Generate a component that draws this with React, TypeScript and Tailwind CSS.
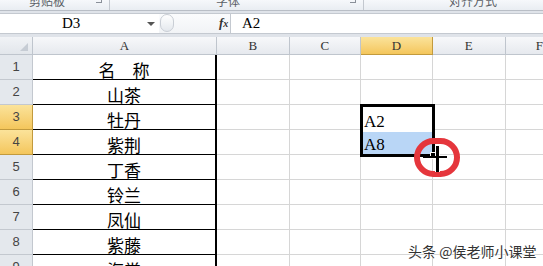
import React from "react";

const rows = ["名　称", "山茶", "牡丹", "紫荆", "丁香", "铃兰", "凤仙", "紫藤", "海棠"];
const cols = [
  { k: "B", w: "w-[73px]" },
  { k: "C", w: "w-[71px]" },
  { k: "D", w: "w-[72px]" },
  { k: "E", w: "w-[73px]" },
];

const cjk = { fontFamily: '"Noto Sans CJK SC", "Noto Sans", sans-serif' };

export default function App() {
  return (
    <div className="relative w-[543px] h-[266px] overflow-hidden bg-white select-none">
      {/* ribbon group labels (cut) */}
      <div className="flex h-[11px] overflow-hidden bg-gradient-to-b from-[#f6f8fb] to-[#e9edf2] border-b border-[#b9bec6] text-[12px] text-[#5b5f66]" style={cjk}>
        <div className="relative w-[110px] border-r border-[#c3c8cf]">
          <span className="absolute left-[29px] top-[-7px] leading-[16px]">剪贴板</span>
          <span className="absolute left-[96px] top-[-3px] w-[6px] h-[6px] border-r border-b border-[#8a9099]" />
        </div>
        <div className="relative w-[254px] border-r border-[#c3c8cf]">
          <span className="absolute left-[106px] top-[-7px] leading-[16px]">字体</span>
          <span className="absolute left-[240px] top-[-3px] w-[6px] h-[6px] border-r border-b border-[#8a9099]" />
        </div>
        <div className="relative flex-1">
          <span className="absolute left-[85px] top-[-7px] leading-[16px]">对齐方式</span>
        </div>
      </div>
      <div className="h-[2px] bg-[#dfe3e9]" />
      {/* formula bar */}
      <div className="flex h-[21px] bg-white border-y border-[#c4c9d0]">
        <div className="relative w-[159px] flex items-center">
          <span className="absolute left-[62px] top-[1px] text-[15px] leading-[17px] text-black font-['Liberation_Serif',serif]">D3</span>
          <span className="absolute left-[147px] top-[8px] w-0 h-0 border-l-[4px] border-r-[4px] border-t-[4px] border-l-transparent border-r-transparent border-t-[#555]" />
        </div>
        <div className="relative w-[71px] flex items-center bg-gradient-to-b from-[#fbfcfd] to-[#f1f3f6]">
          <span className="absolute left-[1px] top-[0px] w-[14px] h-[18px] rounded-full border border-[#c9ced5] bg-gradient-to-b from-[#ffffff] to-[#e4e8ed]" />
          <span className="absolute left-[60px] top-[0px] text-[13px] leading-[18px] italic font-bold text-[#333] font-['Liberation_Serif',serif]">
            f<span className="text-[10px]">x</span>
          </span>
        </div>
        <div className="w-px bg-[#c4c9d0]" />
        <div className="flex-1 relative">
          <span className="absolute left-[11px] top-[1px] text-[15px] leading-[17px] text-black font-['Liberation_Serif',serif]">A2</span>
        </div>
      </div>
      <div className="h-[3px] bg-[#dfe3e9]" />
      {/* column headers */}
      <div className="flex h-[18px] text-[13px] text-[#333] font-['Liberation_Serif',serif]">
        <div className="relative w-[33px] border-r border-b border-[#bfc5cd] bg-gradient-to-b from-[#f1f3f6] to-[#e2e6eb]">
          <span className="absolute right-[4px] bottom-[3px] w-0 h-0" style={{ borderBottom: "8px solid #c6ccd4", borderLeft: "8px solid transparent" }} />
        </div>
        <div className="w-[184px] flex items-center justify-center border-r border-b border-[#bfc5cd] bg-gradient-to-b from-[#f7f8fa] to-[#e6e9ee]">A</div>
        {cols.map((c) =>
          c.k === "D" ? (
            <div key={c.k} className={`${c.w} flex items-center justify-center border-r border-b border-[#c29a3d] bg-gradient-to-b from-[#fbe39a] to-[#f4c65b]`}>D</div>
          ) : (
            <div key={c.k} className={`${c.w} flex items-center justify-center border-r border-b border-[#bfc5cd] bg-gradient-to-b from-[#f7f8fa] to-[#e6e9ee]`}>{c.k}</div>
          )
        )}
        <div className="flex-1 flex items-center pl-[30px] border-b border-[#bfc5cd] bg-gradient-to-b from-[#f7f8fa] to-[#e6e9ee]">F</div>
      </div>
      {/* rows */}
      {rows.map((name, i) => {
        const sel = i === 2 || i === 3;
        return (
          <div key={i} className="flex h-[25px]">
            <div
              className={
                sel
                  ? "w-[33px] flex items-center justify-center border-r border-b border-[#c29a3d] bg-gradient-to-b from-[#fbe39a] to-[#f4c65b] text-[13px] text-[#444] font-['Liberation_Sans',sans-serif]"
                  : "w-[33px] flex items-center justify-center border-r border-b border-[#c3c8cf] bg-[#e4e8ed] text-[13px] text-[#444] font-['Liberation_Sans',sans-serif]"
              }
            >
              {i + 1}
            </div>
            <div className="w-[184px] flex items-center justify-center border-r-2 border-b border-black text-[17px] leading-none text-black pt-[4px]" style={cjk}>
              {name}
            </div>
            {cols.map((c) => (
              <div key={c.k} className={`${c.w} border-r border-b border-[#d6d6d6]`} />
            ))}
            <div className="flex-1 border-b border-[#d6d6d6]" />
          </div>
        );
      })}

      {/* selection D3:D4 */}
      <div className="absolute left-[360px] top-[104px] w-[75px] h-[53px] border-[3px] border-black flex flex-col bg-white text-[17px] text-black font-['Liberation_Serif',serif]">
        <div className="h-[24px] flex items-end pl-[1px] leading-[19px]">A2</div>
        <div className="flex-1 flex items-end pl-[1px] leading-[19px] bg-[#b9d6f6] mt-[1px]">A8</div>
      </div>
      {/* fill handle */}
      <div className="absolute left-[430px] top-[152px] w-[7px] h-[7px] bg-black border border-white" />
      {/* red highlight circle */}
      <div className="absolute left-[414px] top-[138px] w-[46px] h-[39px] rounded-full border-[6px] border-[#e5363c]" />
      {/* cursor */}
      <div className="absolute left-[435px] top-[146px] w-[3px] h-[26px] bg-black border-x border-white box-content" />
      <div className="absolute left-[423px] top-[156px] w-[24px] h-[2px] bg-black" />
      {/* watermark */}
      <div
        className="absolute left-[408px] top-[242px] text-[14px] leading-[18px] text-[#333]"
        style={{ ...cjk, textShadow: "0 0 2px #fff, 0 0 2px #fff" }}
      >
        头条 @侯老师小课堂
      </div>
    </div>
  );
}
